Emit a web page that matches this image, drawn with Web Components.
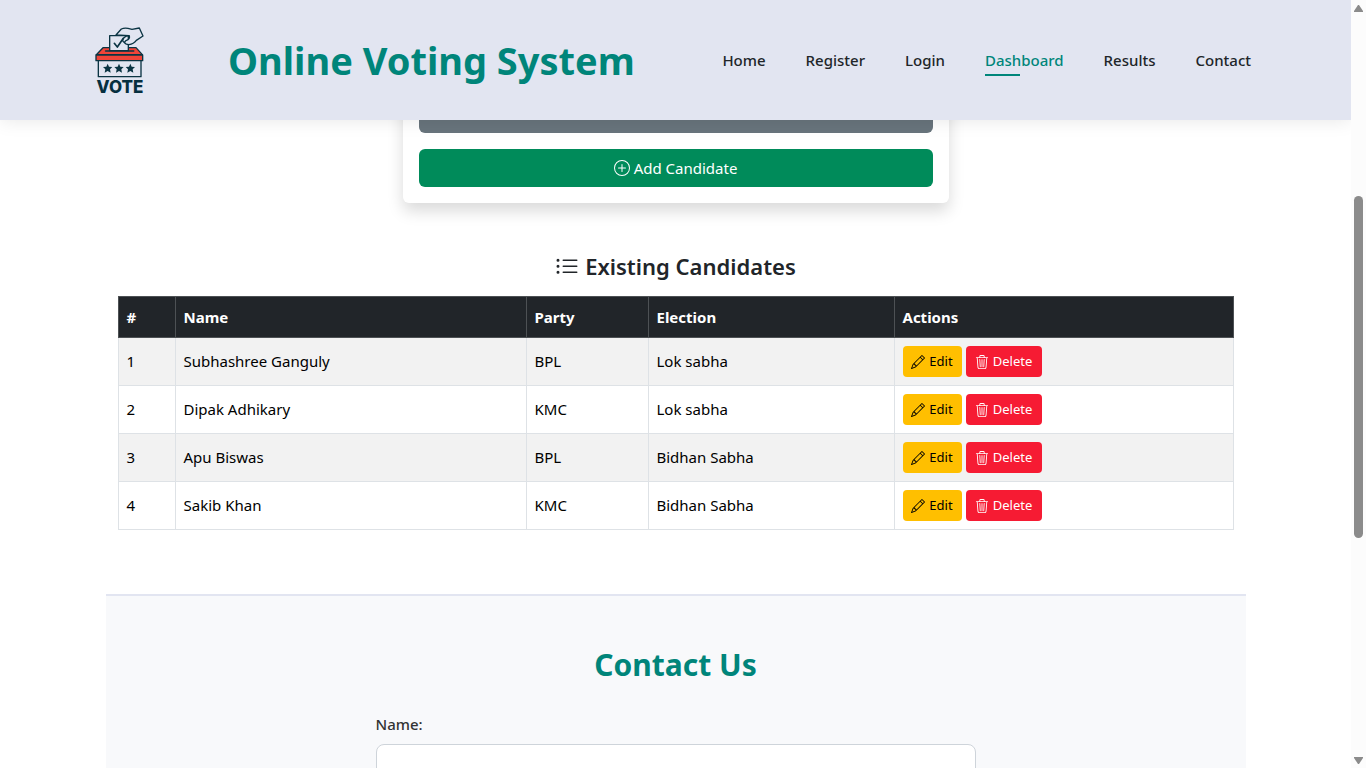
<!DOCTYPE html>
<html lang="en">
<head>
<meta charset="utf-8">
<title>Online Voting System</title>
<style>
  html, body { margin: 0; height: 100%; }
  body {
    font: 15px/24px "Noto Sans", "Open Sans", sans-serif;
    color: #212529;
    background: #fff;
    overflow: hidden;
  }
</style>
</head>
<body>
<voting-app></voting-app>

<script>
const define = (name, html, setup) => {
  const tpl = document.createElement('template');
  tpl.innerHTML = html;
  customElements.define(name, class extends HTMLElement {
    connectedCallback() {
      if (this.shadowRoot) return;
      this.attachShadow({ mode: 'open' }).append(tpl.content.cloneNode(true));
      if (setup) setup(this.shadowRoot, this);
    }
  });
};

const ICONS = {
  plus: '<path d="M8 15A7 7 0 1 1 8 1a7 7 0 0 1 0 14m0 1A8 8 0 1 0 8 0a8 8 0 0 0 0 16"/><path d="M8 4a.5.5 0 0 1 .5.5v3h3a.5.5 0 0 1 0 1h-3v3a.5.5 0 0 1-1 0v-3h-3a.5.5 0 0 1 0-1h3v-3A.5.5 0 0 1 8 4"/>',
  list: '<path fill-rule="evenodd" d="M5 11.5a.5.5 0 0 1 .5-.5h9a.5.5 0 0 1 0 1h-9a.5.5 0 0 1-.5-.5m0-4a.5.5 0 0 1 .5-.5h9a.5.5 0 0 1 0 1h-9a.5.5 0 0 1-.5-.5m0-4a.5.5 0 0 1 .5-.5h9a.5.5 0 0 1 0 1h-9a.5.5 0 0 1-.5-.5m-3 1a1 1 0 1 0 0-2 1 1 0 0 0 0 2m0 4a1 1 0 1 0 0-2 1 1 0 0 0 0 2m0 4a1 1 0 1 0 0-2 1 1 0 0 0 0 2"/>',
  pencil: '<path d="M12.146.146a.5.5 0 0 1 .708 0l3 3a.5.5 0 0 1 0 .708l-10 10a.5.5 0 0 1-.168.11l-5 2a.5.5 0 0 1-.65-.65l2-5a.5.5 0 0 1 .11-.168zM11.207 2.5 13.5 4.793 14.793 3.5 12.5 1.207zm1.586 3L10.5 3.207 4 9.707V10h.5a.5.5 0 0 1 .5.5v.5h.5a.5.5 0 0 1 .5.5v.5h.293zm-9.761 5.175-.106.106-1.528 3.821 3.821-1.528.106-.106A.5.5 0 0 1 5 12.5V12h-.5a.5.5 0 0 1-.5-.5V11h-.5a.5.5 0 0 1-.468-.325"/>',
  trash: '<path d="M6.5 1h3a.5.5 0 0 1 .5.5v1H6v-1a.5.5 0 0 1 .5-.5M11 2.5v-1A1.5 1.5 0 0 0 9.5 0h-3A1.5 1.5 0 0 0 5 1.5v1H1.5a.5.5 0 0 0 0 1h.538l.853 10.66A2 2 0 0 0 4.885 16h6.23a2 2 0 0 0 1.994-1.84l.853-10.66h.538a.5.5 0 0 0 0-1zm1.958 1-.846 10.58a1 1 0 0 1-.997.92h-6.23a1 1 0 0 1-.997-.92L3.042 3.5zm-7.487 1a.5.5 0 0 1 .528.47l.5 8.5a.5.5 0 0 1-.998.06L5 5.03a.5.5 0 0 1 .47-.53Zm5.058 0a.5.5 0 0 1 .47.53l-.5 8.5a.5.5 0 1 1-.998-.06l.5-8.5a.5.5 0 0 1 .528-.47M8 4.5a.5.5 0 0 1 .5.5v8.5a.5.5 0 0 1-1 0V5a.5.5 0 0 1 .5-.5"/>'
};

define('bi-icon', `
<style>
  :host { display: inline-flex; flex: none; width: 14px; height: 14px; }
  svg { width: 100%; height: 100%; fill: currentColor; }
</style>
<svg viewBox="0 0 16 16" aria-hidden="true"></svg>`,
(root, el) => { root.querySelector('svg').innerHTML = ICONS[el.getAttribute('name')]; });

define('vote-logo', `
<style>
  :host { display: flex; flex-direction: column; align-items: center; width: 50px; flex: none; }
  svg { display: block; width: 50px; height: 54px; }
  span { font: 800 17px/14px Inter, "Open Sans", sans-serif; color: #062f3f; }
</style>
<svg viewBox="45 32 150 162" fill="none" stroke="#0b3443" stroke-width="4" stroke-linejoin="round" stroke-linecap="round" aria-hidden="true">
  <path d="M55 137V184H183V137" />
  <path d="M69 97H168L187 118H49Z" fill="#ef4438"/>
  <path d="M77 107H161" stroke-width="5"/>
  <path d="M89 106V61H145V106Z" fill="#e2e5f1"/>
  <path d="M48 119H188V136H48Z" fill="#ef4438"/>
  <path d="M108 59L124 41Q132 37 144 39L156 42L178 38L189 62L169 75Q161 86 147 88Q136 88 133 81Q136 76 144 73Q151 67 147 61Z" fill="#e2e5f1"/>
  <path d="M147 61Q139 60 132 67Q125 76 131 80"/>
  <path d="M103 84L112 95L130 69" stroke-width="5"/>
  <g fill="#0b3443" stroke="none">
    <path d="M83 145l4 9 10 1-7 7 2 10-9-5-9 5 2-10-7-7 10-1z"/>
    <path d="M117 145l4 9 10 1-7 7 2 10-9-5-9 5 2-10-7-7 10-1z"/>
    <path d="M151 145l4 9 10 1-7 7 2 10-9-5-9 5 2-10-7-7 10-1z"/>
  </g>
</svg>
<span>VOTE</span>`);

define('nav-link', `
<style>
  :host { display: block; }
  a { display: block; position: relative; color: #212529; font-weight: 500; text-decoration: none; }
  :host([active]) a { color: #00857a; }
  :host([active]) a::after {
    content: ""; position: absolute; left: 0; bottom: -4px; width: 35px; height: 2px; background: #00857a;
  }
</style>
<a href="#"><slot></slot></a>`);

define('site-header', `
<style>
  :host {
    display: flex; align-items: center; position: relative; z-index: 1; flex: none;
    box-sizing: border-box; height: 120px; padding: 0 100px 0 95px;
    background: #e2e5f1; box-shadow: 0 0 18px rgba(0,0,0,.1);
  }
  h1 { margin: 0 0 0 83px; font-size: 38px; line-height: 48px; font-weight: 700; color: #00857a; white-space: nowrap; }
  nav { display: flex; gap: 40px; margin-left: auto; }
</style>
<vote-logo></vote-logo>
<h1>Online Voting System</h1>
<nav>
  <nav-link>Home</nav-link>
  <nav-link>Register</nav-link>
  <nav-link>Login</nav-link>
  <nav-link active>Dashboard</nav-link>
  <nav-link>Results</nav-link>
  <nav-link>Contact</nav-link>
</nav>`);

define('candidate-form', `
<style>
  :host {
    display: flex; flex-direction: column; gap: 16px; box-sizing: border-box;
    width: 100%; max-width: 546px; margin: -41px auto 0; padding: 16px;
    background: #fff; border-radius: 6px; box-shadow: 0 8px 16px rgba(0,0,0,.15);
  }
  button {
    display: flex; align-items: center; justify-content: center; gap: 4px;
    height: 38px; border: 0; border-radius: 6px; font: inherit; color: #fff;
  }
  .plain { background: #68747c; }
  .add { background: #008b5a; }
  bi-icon { width: 16px; height: 16px; }
</style>
<button class="plain" type="button" aria-label="Reset"></button>
<button class="add" type="submit"><bi-icon name="plus"></bi-icon>Add Candidate</button>`);

define('row-action', `
<style>
  :host { display: block; }
  button {
    display: flex; align-items: center; justify-content: center; gap: 4px;
    width: 59px; height: 31px; padding: 0; border: 0; border-radius: 4px;
    font: inherit; font-size: 13px; line-height: 21px; background: #ffbf00; color: #000;
  }
  :host([kind="delete"]) button { width: 76px; background: #f61b33; color: #fff; }
</style>
<button type="button"><slot name="icon"></slot><slot></slot></button>`);

define('candidate-table', `
<style>
  :host { display: block; margin: 48px 12px 0; }
  h2 {
    display: flex; align-items: center; justify-content: center; gap: 6px;
    margin: 0 0 14px; font-size: 22px; line-height: 31px; font-weight: 600;
  }
  h2 bi-icon { width: 24px; height: 24px; }
  table { width: 100%; table-layout: fixed; border-collapse: collapse; color: #000; }
  .num { width: 57px; } .name { width: 351px; } .party { width: 122px; } .election { width: 246px; }
  th, td { box-sizing: border-box; text-align: left; border: 1px solid #dee2e6; }
  th { height: 41px; padding: 0 8px; background: #212529; color: #fff; border-color: #4d5154; font-weight: 700; }
  td { height: 48px; padding: 8px 8px 0; vertical-align: top; line-height: 30px; }
  tbody tr:nth-child(odd) { background: #f2f2f2; }
  .actions { display: flex; gap: 4px; }
</style>
<h2><bi-icon name="list"></bi-icon>Existing Candidates</h2>
<table>
  <colgroup><col class="num"><col class="name"><col class="party"><col class="election"><col></colgroup>
  <thead><tr><th>#</th><th>Name</th><th>Party</th><th>Election</th><th>Actions</th></tr></thead>
  <tbody></tbody>
</table>`,
root => {
  root.querySelector('tbody').innerHTML = [
    ['Subhashree Ganguly', 'BPL', 'Lok sabha'],
    ['Dipak Adhikary', 'KMC', 'Lok sabha'],
    ['Apu Biswas', 'BPL', 'Bidhan Sabha'],
    ['Sakib Khan', 'KMC', 'Bidhan Sabha']
  ].map((r, i) => `<tr><td>${i + 1}</td>${r.map(c => `<td>${c}</td>`).join('')}<td><div class="actions">
    <row-action kind="edit"><bi-icon slot="icon" name="pencil"></bi-icon>Edit</row-action>
    <row-action kind="delete"><bi-icon slot="icon" name="trash"></bi-icon>Delete</row-action></div></td></tr>`).join('');
});

define('contact-section', `
<style>
  :host {
    display: block; margin-top: 64px; padding: 50px 16px;
    background: #f8f9fb; border-top: 2px solid #e2e5f1;
  }
  h2 { margin: 0 0 28px; font-size: 30px; line-height: 38px; font-weight: 700; color: #00857a; text-align: center; }
  form { display: flex; flex-direction: column; gap: 8px; max-width: 600px; margin: 0 auto; }
  label { font-weight: 500; color: #333; }
  input { box-sizing: border-box; width: 100%; height: 48px; padding: 0 12px; border: 1px solid #ced4da; border-radius: 8px; background: #fff; font: inherit; }
</style>
<h2>Contact Us</h2>
<form>
  <label for="name">Name:</label>
  <input id="name" type="text">
</form>`);

define('page-scrollbar', `
<style>
  :host {
    display: flex; flex-direction: column; align-items: center; justify-content: space-between;
    box-sizing: border-box; width: 15px; flex: none; padding: 5px 0 4px; background: #fcfcfc;
  }
  svg { display: block; width: 9px; height: 7px; fill: #8b8b8b; flex: none; }
  .track { display: flex; flex-direction: column; flex: 1; width: 9px; }
  .before { flex: 184; }
  .thumb { flex: 342; background: #8b8b8b; border-radius: 5px; }
  .after { flex: 219; }
</style>
<svg viewBox="0 0 9 7"><path d="M4 0h1l4 6v1H0V6z"/></svg>
<div class="track"><div class="before"></div><div class="thumb"></div><div class="after"></div></div>
<svg viewBox="0 0 9 7"><path d="M4 7h1l4-6V0H0v1z"/></svg>`);

define('voting-app', `
<style>
  :host { display: flex; height: 100vh; }
  .page { display: flex; flex-direction: column; flex: 1; min-width: 0; overflow: hidden; }
  main { box-sizing: border-box; width: 100%; max-width: 1140px; margin: 0 auto; }
</style>
<div class="page">
  <site-header></site-header>
  <main>
    <candidate-form></candidate-form>
    <candidate-table></candidate-table>
    <contact-section></contact-section>
  </main>
</div>
<page-scrollbar></page-scrollbar>`);
</script>
</body>
</html>
